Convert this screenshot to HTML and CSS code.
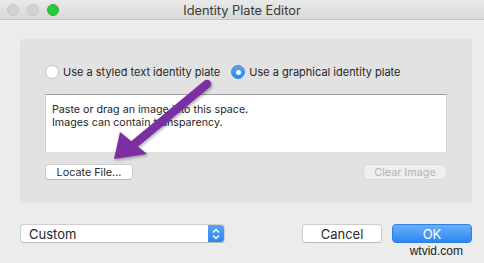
FILE: index.html
```html
<!DOCTYPE html>
<html lang="en">
<head>
  <meta charset="UTF-8">
  <title>Identity Plate Editor</title>
  <link rel="stylesheet" href="styles.css">
</head>
<body>
  <div class="window">
    <!-- barra del titolo -->
    <header class="titlebar">
      <div class="lights">
        <span class="light"></span>
        <span class="light"></span>
        <span class="light green"></span>
      </div>
      <div class="title">Identity Plate Editor</div>
    </header>

    <main class="content">
      <section class="group">
        <div class="radios">
          <label class="radio"><span class="dot"></span>Use a styled text identity plate</label>
          <label class="radio"><span class="dot on"></span>Use a graphical identity plate</label>
        </div>
        <div class="well">
          <p>Paste or drag an image into this space.</p>
          <p>Images can contain transparency.</p>
        </div>
        <div class="group-buttons">
          <button class="btn small">Locate File...</button>
          <button class="btn small disabled">Clear Image</button>
        </div>
      </section>

      <footer class="footer">
        <div class="popup">
          <span>Custom</span>
          <span class="stepper">
            <svg width="16" height="20" viewBox="0 0 16 20">
              <path d="M5 8.5 L8 5.5 L11 8.5 M5 11.5 L8 14.5 L11 11.5" fill="none" stroke="#fff" stroke-width="1.4"/>
            </svg>
          </span>
        </div>
        <div class="actions">
          <button class="btn big">Cancel</button>
          <button class="btn big primary">OK</button>
        </div>
      </footer>
      <div class="watermark">wtvid.com</div>
    </main>

    <!-- freccia viola sopra il contenuto -->
    <svg class="arrow" width="484" height="263" viewBox="0 0 484 263">
      <defs>
        <filter id="sh" x="-20%" y="-20%" width="140%" height="140%">
          <feDropShadow dx="1" dy="1.5" stdDeviation="1.5" flood-color="#000" flood-opacity="0.35"/>
        </filter>
      </defs>
      <g filter="url(#sh)" fill="#7b2da3">
        <path d="M207 84 L132 146" stroke="#7b2da3" stroke-width="8.5" stroke-linecap="round"/>
        <path d="M114 159 L120 132 L147 154 Z"/>
      </g>
    </svg>
  </div>
</body>
</html>
```

FILE: styles.css
```css
/* base */
* {
  margin: 0;
  padding: 0;
  box-sizing: border-box;
}
body {
  background: #ececec;
  font-family: 'Inter', 'Noto Sans', sans-serif;
  color: #262626;
  overflow: hidden;
}

.window {
  position: relative;
  width: 484px;
  height: 263px;
}

/* barra del titolo */
.titlebar {
  height: 20px;
  display: flex;
  align-items: center;
  background: linear-gradient(#e9e9e9, #d8d8d8);
  border-bottom: 1px solid #c4c4c4;
  position: relative;
}
.lights {
  display: flex;
  gap: 8px;
  padding-left: 7px;
}
.light {
  width: 12px;
  height: 12px;
  border-radius: 50%;
  background: #d2d2d2;
  border: 1px solid #c6c6c6;
}
.light.green {
  background: #2bc940;
  border-color: #25b236;
}
.title {
  position: absolute;
  left: 0;
  right: 0;
  text-align: center;
  font-size: 12.8px;
  color: #3a3a3a;
  padding-top: 1px;
}

.content {
  padding: 19px 12px 0 20px;
}

/* gruppo centrale */
.group {
  width: 452px;
  height: 164px;
  background: #e2e2e2;
  border-radius: 4px;
  padding: 25px 25px 0 25px;
}
.radios {
  display: flex;
  gap: 11px;
  height: 16px;
  align-items: center;
  font-size: 11px;
}
.radio {
  display: flex;
  align-items: center;
  gap: 4px;
}
.dot {
  width: 14px;
  height: 14px;
  border-radius: 50%;
  background: #fff;
  border: 1px solid #c2c2c2;
  display: flex;
  align-items: center;
  justify-content: center;
}
.dot.on {
  background: linear-gradient(#5aa5f8, #2a84f1);
  border-color: #3a8ae8;
}
.dot.on::after {
  content: "";
  width: 5px;
  height: 5px;
  border-radius: 50%;
  background: #fff;
}

.well {
  margin-top: 14px;
  width: 402px;
  height: 58px;
  background: #fff;
  border-top: 1px solid #9c9c9c;
  border-left: 1px solid #d0d0d0;
  border-right: 1px solid #d0d0d0;
  padding: 8px 6px;
  font-size: 10.7px;
  line-height: 13px;
  color: #262626;
}

.group-buttons {
  margin-top: 12px;
  width: 402px;
  display: flex;
  justify-content: space-between;
}

/* bottoni */
.btn {
  font-family: inherit;
  background: #fff;
  border: 1px solid #cdcdcd;
  border-bottom-color: #b8b8b8;
  border-radius: 4px;
  color: #2a2a2a;
  white-space: nowrap;
  padding: 0;
}
.btn.small {
  height: 16px;
  width: 88px;
  font-size: 10.8px;
}
.btn.small.disabled {
  width: 84px;
  color: #b5b5b5;
  background: #eeeeee;
  border-color: #d8d8d8;
}
.btn.big {
  height: 19px;
  width: 80px;
  font-size: 13px;
}
.btn.primary {
  background: linear-gradient(#6aaff9, #2c86f3);
  border-color: #2f80e2;
  color: #fff;
}

/* riga in basso */
.footer {
  margin-top: 21px;
  display: flex;
  justify-content: space-between;
  align-items: center;
}
.popup {
  width: 205px;
  height: 19px;
  background: #fff;
  border: 1px solid #cfcfcf;
  border-bottom-color: #b9b9b9;
  border-radius: 4px;
  display: flex;
  justify-content: space-between;
  align-items: center;
  padding-left: 8px;
  font-size: 13px;
  overflow: hidden;
}
.stepper {
  width: 16px;
  height: 19px;
  background: linear-gradient(#5aa6f9, #2a84f1);
  display: flex;
  align-items: center;
}
.actions {
  display: flex;
  gap: 10px;
}

.watermark {
  text-align: right;
  padding-right: 9px;
  margin-top: 1px;
  font-family: 'Liberation Sans', sans-serif;
  font-size: 12px;
  color: #222;
}

.arrow {
  position: absolute;
  left: 0;
  top: 0;
  pointer-events: none;
}
```
